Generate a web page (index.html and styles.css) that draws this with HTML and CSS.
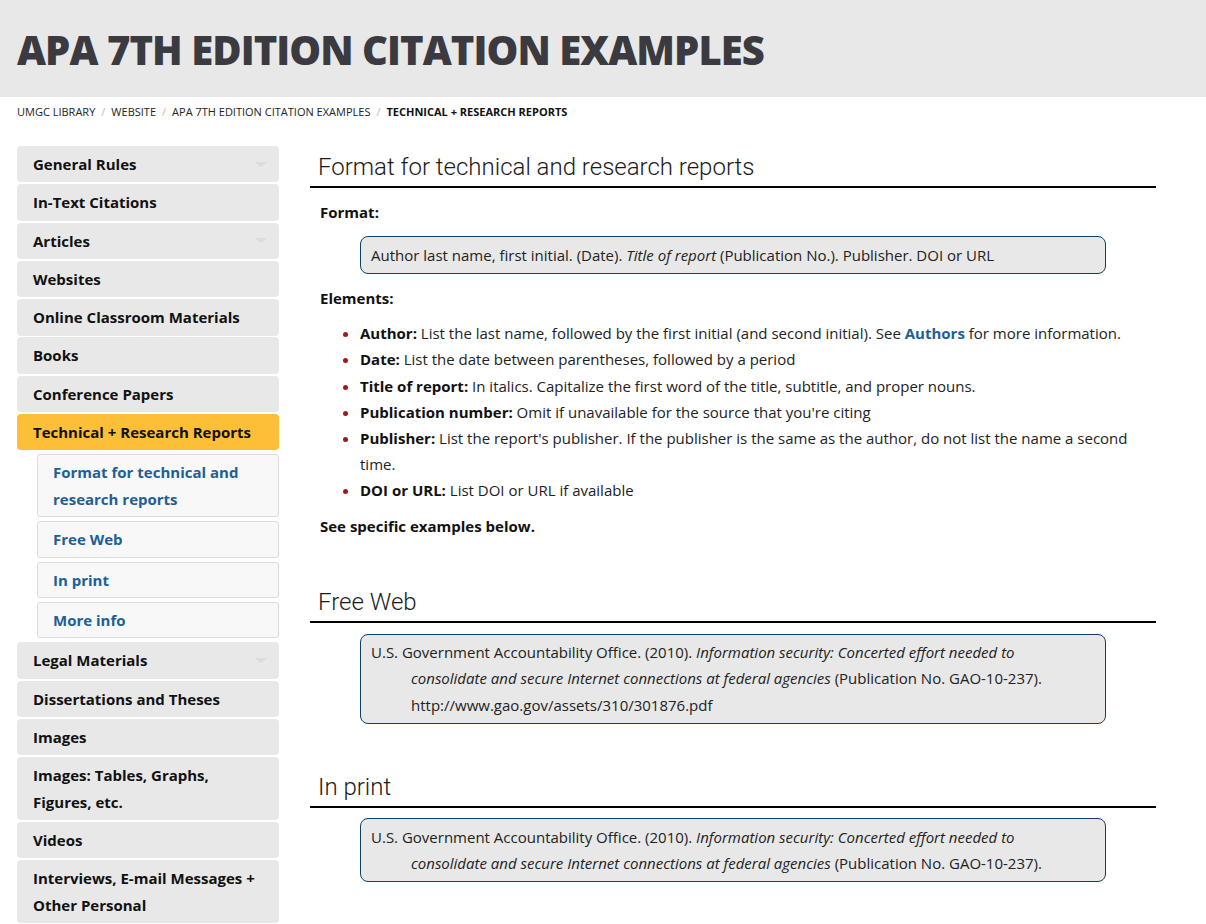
FILE: index.html
```html
<!DOCTYPE html>
<html lang="en">
<head>
<meta charset="utf-8">
<title>APA 7th Edition Citation Examples</title>
<link rel="stylesheet" href="styles.css">
</head>
<body>
<header class="banner">
  <h1 class="banner-title">APA 7TH EDITION CITATION EXAMPLES</h1>
</header>
<nav class="crumbs">
  <a href="#">UMGC Library</a><span class="sep">/</span><a href="#">Website</a><span class="sep">/</span><a href="#">APA 7th Edition Citation Examples</a><span class="sep">/</span><strong>Technical + Research Reports</strong>
</nav>
<div class="layout">
  <aside class="side">
    <a class="nav-item" href="#"><span>General Rules</span><i class="caret"></i></a>
    <a class="nav-item" href="#"><span>In-Text Citations</span></a>
    <a class="nav-item" href="#"><span>Articles</span><i class="caret"></i></a>
    <a class="nav-item" href="#"><span>Websites</span></a>
    <a class="nav-item" href="#"><span>Online Classroom Materials</span></a>
    <a class="nav-item" href="#"><span>Books</span></a>
    <a class="nav-item" href="#"><span>Conference Papers</span></a>
    <a class="nav-item active" href="#"><span>Technical + Research Reports</span></a>
    <div class="subnav">
      <a class="sub-item" href="#">Format for technical and research reports</a>
      <a class="sub-item" href="#">Free Web</a>
      <a class="sub-item" href="#">In print</a>
      <a class="sub-item" href="#">More info</a>
    </div>
    <a class="nav-item" href="#"><span>Legal Materials</span><i class="caret"></i></a>
    <a class="nav-item" href="#"><span>Dissertations and Theses</span></a>
    <a class="nav-item" href="#"><span>Images</span></a>
    <a class="nav-item" href="#"><span>Images: Tables, Graphs, Figures, etc.</span></a>
    <a class="nav-item" href="#"><span>Videos</span></a>
    <a class="nav-item" href="#"><span>Interviews, E-mail Messages + Other Personal</span></a>
  </aside>
  <main class="content">
    <section class="box-section first">
      <h2 class="sec-title">Format for technical and research reports</h2>
      <p class="label">Format:</p>
      <div class="cite">Author last name, first initial. (Date). <em>Title of report</em> (Publication No.). Publisher. DOI or URL</div>
      <p class="label">Elements:</p>
      <ul class="elements">
        <li><b>Author:</b> List the last name, followed by the first initial (and second initial). See <a href="#">Authors</a> for more information.</li>
        <li><b>Date:</b> List the date between parentheses, followed by a period</li>
        <li><b>Title of report:</b> In italics. Capitalize the first word of the title, subtitle, and proper nouns.</li>
        <li><b>Publication number:</b> Omit if unavailable for the source that you're citing</li>
        <li><b>Publisher:</b> List the report's publisher. If the publisher is the same as the author, do not list the name a second time.</li>
        <li><b>DOI or URL:</b> List DOI or URL if available</li>
      </ul>
      <p class="label tail">See specific examples below.</p>
    </section>
    <section class="box-section">
      <h2 class="sec-title">Free Web</h2>
      <div class="cite hang">U.S. Government Accountability Office. (2010). <em>Information security: Concerted effort needed to consolidate and secure Internet connections at federal agencies</em> (Publication No. GAO-10-237). http://www.gao.gov/assets/310/301876.pdf</div>
    </section>
    <section class="box-section">
      <h2 class="sec-title">In print</h2>
      <div class="cite hang">U.S. Government Accountability Office. (2010). <em>Information security: Concerted effort needed to consolidate and secure Internet connections at federal agencies</em> (Publication No. GAO-10-237).</div>
    </section>
  </main>
</div>
</body>
</html>
```
FILE: styles.css
```css
* { box-sizing: border-box; }
body {
  margin: 0;
  font-family: "Open Sans", "Liberation Sans", sans-serif;
  font-size: 15px;
  color: #111;
  background: #fff;
}
a { text-decoration: none; }

.banner {
  background: #e8e8e8;
  height: 97px;
  padding: 26px 17px 0;
}
.banner-title {
  margin: 0;
  font-family: "Open Sans", sans-serif;
  font-weight: 800;
  font-size: 40px;
  line-height: 48px;
  color: #3a3a40;
  letter-spacing: -0.95px;
}

.crumbs {
  padding: 0 17px;
  height: 30px;
  line-height: 30px;
  font-size: 11px;
  text-transform: uppercase;
  color: #222;
}
.crumbs a { color: #222; }
.crumbs strong { font-weight: 700; color: #111; }
.crumbs .sep { color: #bbb; padding: 0 6px; }

.layout {
  display: grid;
  grid-template-columns: 262px 1fr;
  column-gap: 31px;
  padding: 19px 50px 0 17px;
}

.side { display: flex; flex-direction: column; }
.nav-item {
  display: flex;
  justify-content: space-between;
  align-items: center;
  background: #e8e8e8;
  border-radius: 4px;
  padding: 5px 12px 5px 16px;
  line-height: 26.4px;
  font-weight: 700;
  color: #111;
  margin-bottom: 1.9px;
}
.nav-item.active { background: #fdbf38; }
.caret {
  width: 0; height: 0;
  border-left: 6px solid transparent;
  border-right: 6px solid transparent;
  border-top: 5px solid #dcdcdc;
  flex: none;
}
.subnav {
  display: flex;
  flex-direction: column;
  gap: 4px;
  margin: 2px 0 4px 20px;
}
.sub-item {
  display: block;
  background: #f8f8f8;
  border: 1px solid #dcdcdc;
  border-radius: 3px;
  padding: 4px 15px;
  line-height: 26.4px;
  font-weight: 700;
  color: #1e5f97;
}

.content { min-width: 0; }
.box-section { margin-top: 50px; }
.box-section.first { margin-top: 0; }
.sec-title {
  margin: 8px 0 0;
  padding: 0 8px 6px;
  font-family: Roboto, "Open Sans", sans-serif;
  font-weight: 300;
  font-size: 24px;
  line-height: 26px;
  color: #1a1a1a;
  border-bottom: 2px solid #000;
}
.label {
  margin: 11px 0 0;
  padding-left: 10px;
  font-weight: 700;
  line-height: 26.4px;
}
.label.tail { margin-top: 9px; }
.cite {
  margin: 11px 50px 0;
  background: #e8e8e8;
  border: 1px solid #123d66;
  border-radius: 8px;
  padding: 4.5px 10px;
  line-height: 26.4px;
  color: #222;
}
.cite.hang {
  margin-top: 10.5px;
  padding-left: 50px;
  padding-right: 50px;
  text-indent: -40px;
}
.elements {
  margin: 9px 0 0;
  padding-left: 50px;
  line-height: 26.2px;
  color: #222;
}
.elements li::marker { color: #a31919; }
.elements b { color: #111; }
.elements a { color: #1e5f97; font-weight: 700; }
```
